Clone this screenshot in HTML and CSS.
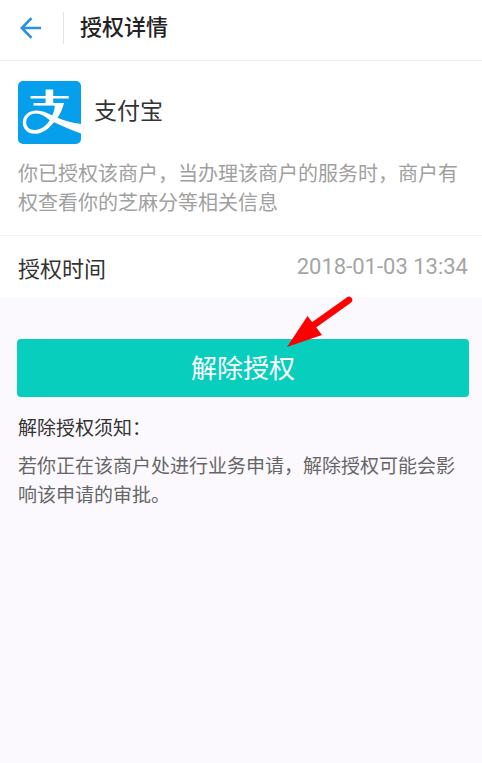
FILE: index.html
```html
<!DOCTYPE html>
<html lang="zh-CN">
<head>
<meta charset="utf-8">
<meta name="viewport" content="width=device-width, initial-scale=1">
<title>授权详情</title>
<link rel="stylesheet" href="styles.css">
</head>
<body>
<header class="topbar">
  <button class="back" type="button" aria-label="返回">
    <svg width="22" height="22" viewBox="0 0 22 22" fill="none" stroke="#2b90e2" stroke-width="2.600" aria-hidden="true"><path d="M21 11H2M11.5 1.2 1.8 11l9.7 9.8"/></svg>
  </button>
  <h1 class="title">授权详情</h1>
</header>
<main>
  <section class="merchant">
    <div class="merchant-head">
      <svg class="logo" viewBox="0 0 63 63" aria-hidden="true">
        <rect width="63" height="63" rx="5" fill="#069fec"/>
        <g fill="none" stroke="#fff">
          <path d="M12.500 16.200H50.700" stroke-width="2.600"/>
          <path d="M31.400 8.500V23.500" stroke-width="7.600"/>
          <path d="M15.500 23.300H44" stroke-width="2.600"/>
        </g>
        <path fill="#fff" d="M36.800 22H46C44.500 28 42.500 32.500 39.500 36.800C46 39.800 54 41.800 63 43V52.500C54 49.500 45 45.200 36 41.200C30 48.500 24 52.800 16.800 52.800C9.500 52.800 4.800 48 4.800 41.800C4.800 34.500 10.500 29.500 18.300 29.500C24.500 29.500 29.500 32 34.300 34.500C36 31 37 27 36.800 22ZM31.800 39.300C27.500 35.500 23 32.400 18 32.400C12 32.400 8.200 36.500 8.200 41.500C8.200 46 11.500 49 16.800 49C22.500 49 27.500 45.500 31.800 39.300Z"/>
      </svg>
      <h2 class="name">支付宝</h2>
    </div>
    <p class="desc">你已授权该商户，当办理该商户的服务时，商户有权查看你的芝麻分等相关信息</p>
  </section>
  <dl class="row">
    <dt>授权时间</dt>
    <dd><time datetime="2018-01-03T13:34">2018-01-03 13:34</time></dd>
  </dl>
  <div class="action">
    <button class="revoke" type="button">解除授权</button>
    <svg class="pointer" width="68" height="54" viewBox="0 0 68 54" fill="#f00" aria-hidden="true">
      <path d="M62 6 24 33" stroke="#f00" stroke-width="6.500" stroke-linecap="round"/>
      <path d="M0 53 20.500 22 35 41Z"/>
    </svg>
  </div>
  <section class="notice">
    <h2>解除授权须知：</h2>
    <p>若你正在该商户处进行业务申请，解除授权可能会影响该申请的审批。</p>
  </section>
</main>
</body>
</html>
```
FILE: styles.css
```css
* {
  box-sizing: border-box;
}

body {
  margin: 0;
  min-height: 100vh;
  background: #fbf9fe;
  color: #333;
  font-family: Roboto, "Noto Sans CJK SC", sans-serif;
}

h1, h2, p, dl, dd {
  margin: 0;
  font-weight: 400;
}

button {
  border: 0;
  font-family: inherit;
}

.topbar {
  display: flex;
  align-items: center;
  height: 61px;
  padding-bottom: 4px;
  background: #fff;
  border-bottom: 1px solid #ececee;
}

.back {
  display: flex;
  height: 32px;
  padding: 5px 21px 5px 20px;
  background: none;
  border-right: 1px solid #e4e4e6;
}

.title {
  padding-left: 16px;
  color: #222;
  font-size: 22px;
  font-weight: 500;
  line-height: 32px;
}

.merchant {
  padding: 20px 14px 17px 18px;
  background: #fff;
  border-bottom: 1px solid #f2f2f4;
}

.merchant-head {
  display: flex;
  align-items: center;
  gap: 13px;
}

.logo {
  width: 63px;
  height: 63px;
}

.name {
  padding-bottom: 2px;
  font-size: 23px;
  line-height: 32px;
}

.desc {
  padding-top: 16px;
  color: #a0a0a0;
  font-size: 20px;
  line-height: 29px;
}

.row {
  display: flex;
  align-items: center;
  justify-content: space-between;
  height: 61px;
  padding: 0 14px 0 18px;
  background: #fff;
  font-size: 22px;
}

.row dd {
  color: #a5a5a5;
}

.action {
  position: relative;
  padding: 42px 13px 0 17px;
}

.revoke {
  display: block;
  width: 100%;
  height: 58px;
  padding: 0 0 4px;
  border-radius: 4px;
  background: #08cebd;
  color: #fff;
  font-size: 26px;
}

.pointer {
  position: absolute;
  top: -3px;
  left: calc(50% + 46px);
}

.notice {
  padding: 17px 18px;
  line-height: 29px;
  font-size: 19px;
}

.notice h2 {
  font-size: 19px;
}

.notice p {
  padding-top: 9px;
  color: #666;
}
```
